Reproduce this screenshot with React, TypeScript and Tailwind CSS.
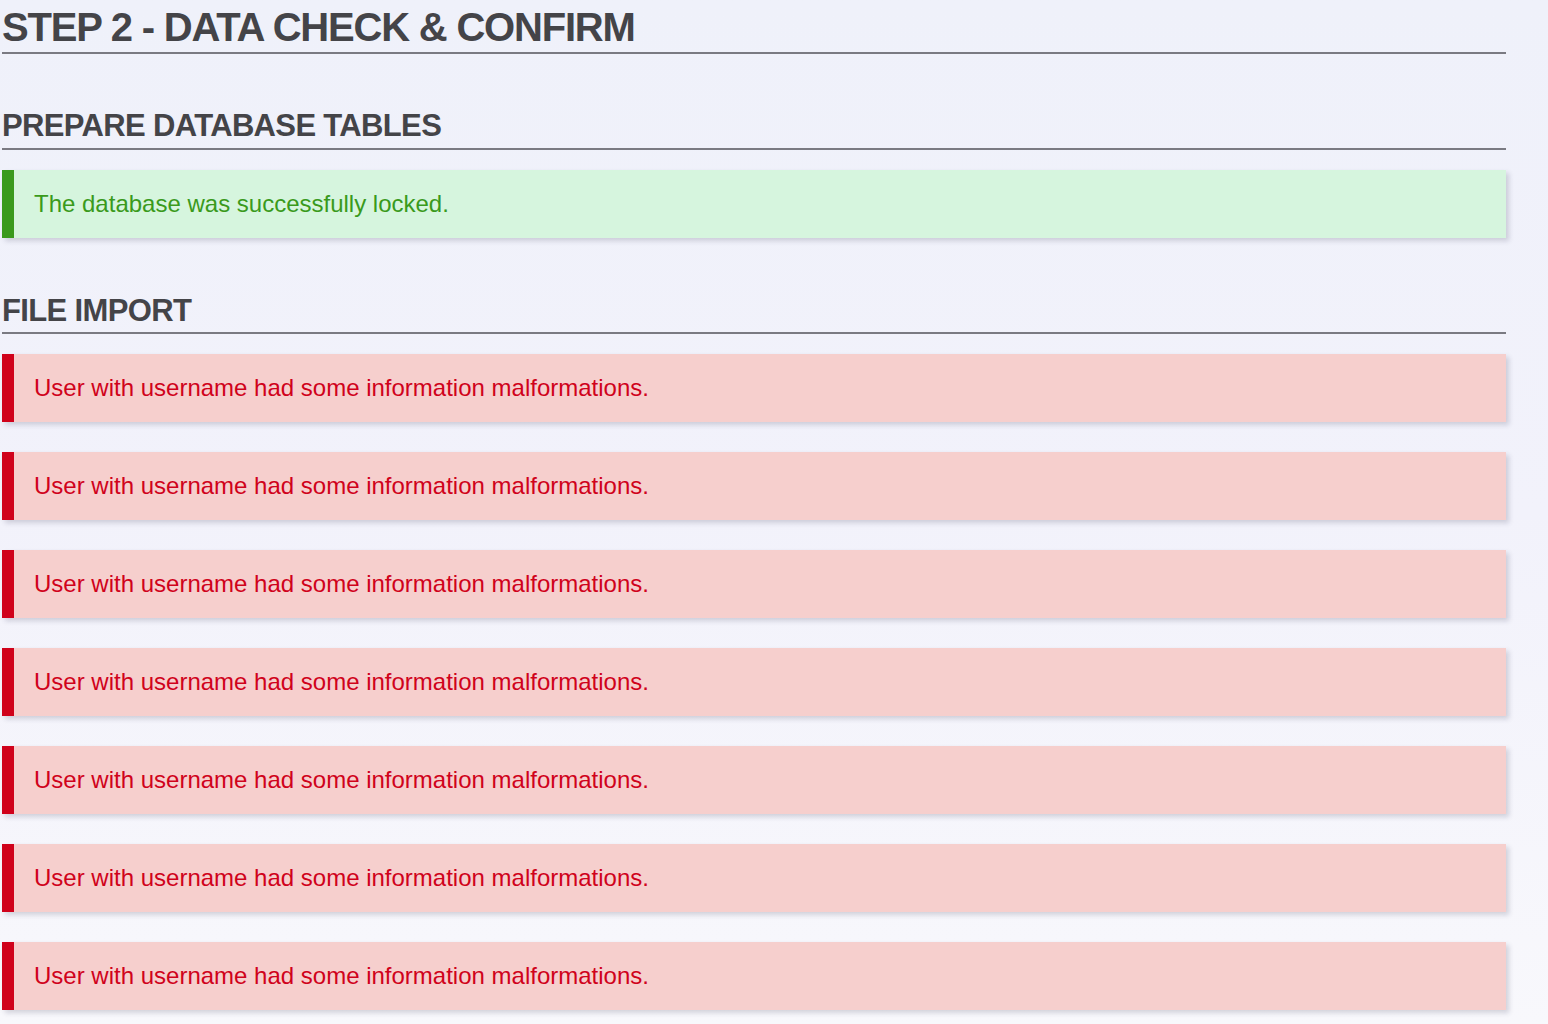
const FONT = { fontFamily: '"Liberation Sans", Arial, sans-serif' };

const Notice = ({ text, kind }: { text: string; kind: 'success' | 'error' }) => {
  const ok = kind === 'success';
  return (
    <div
      className={`flex h-[68px] w-full items-center border-l-[12px] pl-[20px] text-[24px] leading-[68px] shadow-[3px_3px_5px_rgba(40,40,70,0.18)] ${
        ok
          ? 'border-[#3a9a1c] bg-[#d6f5de] text-[#3a9a1c]'
          : 'border-[#d0021b] bg-[#f6cfcd] text-[#d0021b]'
      }`}
    >
      {text}
    </div>
  );
};

export default function App() {
  const errors = Array.from({ length: 7 }, () => 'User with username had some information malformations.');

  return (
    <div
      className="min-h-screen w-full overflow-hidden bg-gradient-to-b from-[#eff1fa] via-[#f2f2fb] to-[#f8f8fc]"
      style={FONT}
    >
      <div className="ml-[2px] w-[1504px]">
        <h1 className="border-b-2 border-[#7a7a82] pb-[5px] pt-[7px] text-[40px] font-bold leading-[40px] tracking-[-1.2px] text-[#444448]">
          STEP 2 - DATA CHECK &amp; CONFIRM
        </h1>

        <h2 className="mt-[56px] border-b-2 border-[#7a7a82] pb-[7px] text-[31px] font-bold leading-[31px] tracking-[-0.65px] text-[#444448]">
          PREPARE DATABASE TABLES
        </h2>
        <div className="mt-[20px]">
          <Notice kind="success" text="The database was successfully locked." />
        </div>

        <h2 className="mt-[57px] border-b-2 border-[#7a7a82] pb-[6px] text-[31px] font-bold leading-[31px] tracking-[-0.65px] text-[#444448]">
          FILE IMPORT
        </h2>
        <div className="mt-[20px] flex flex-col gap-[30px]">
          {errors.map((e, i) => (
            <Notice key={i} kind="error" text={e} />
          ))}
        </div>
      </div>
    </div>
  );
}
